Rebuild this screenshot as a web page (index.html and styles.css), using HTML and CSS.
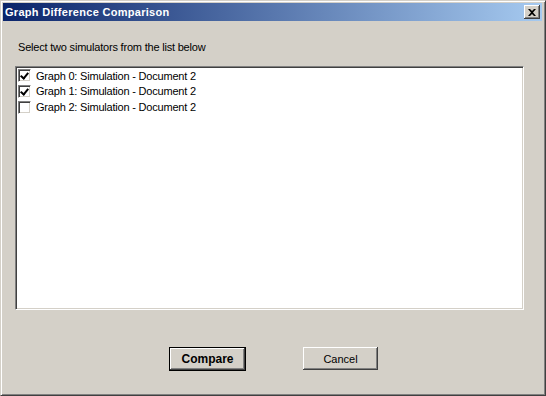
FILE: index.html
```html
<!DOCTYPE html>
<html lang="en">
<head>
  <meta charset="UTF-8" />
  <title>Graph Difference Comparison</title>
  <link rel="stylesheet" href="styles.css">
</head>
<body>
  <div class="window">
    <header class="titlebar">
      <span class="title">Graph Difference Comparison</span>
      <button class="close" aria-label="Close">
        <svg width="8" height="7" viewBox="0 0 8 7">
          <path d="M0 0h2l2 2 2-2h2L5 3.5 8 7H6L4 5 2 7H0l3-3.5z" fill="#000"/>
        </svg>
      </button>
    </header>

    <main class="content">
      <p class="prompt">Select two simulators from the list below</p>

      <div class="list">
        <label class="item">
          <span class="box checked"></span>
          Graph 0: Simulation - Document 2
        </label>
        <label class="item">
          <span class="box checked"></span>
          Graph 1: Simulation - Document 2
        </label>
        <label class="item">
          <span class="box"></span>
          Graph 2: Simulation - Document 2
        </label>
      </div>

      <div class="actions">
        <button class="btn default">Compare</button>
        <button class="btn">Cancel</button>
      </div>
    </main>
  </div>
</body>
</html>
```

FILE: styles.css
```css
:root {
  --face: #d4d0c8;
  --shadow: #808080;
  --dark: #404040;
  --light: #ffffff;
}

body {
  margin: 0;
  font-family: "Liberation Sans", Arial, sans-serif;
  font-size: 11px;
  color: #000;
}

.window {
  width: 546px;
  height: 396px;
  box-sizing: border-box;
  background: var(--face);
  border-top: 1px solid var(--face);
  border-left: 1px solid var(--face);
  border-right: 1px solid var(--dark);
  border-bottom: 1px solid var(--dark);
  box-shadow: inset 1px 1px 0 var(--light), inset -1px -1px 0 var(--shadow);
  padding: 2px 3px 3px 2px;
  display: flex;
  flex-direction: column;
}

.titlebar {
  height: 18px;
  display: flex;
  align-items: center;
  justify-content: space-between;
  padding: 0 2px 0 2px;
  background: linear-gradient(to right, #0a246a, #a6caf0);
}

.title {
  color: #fff;
  font-weight: bold;
  font-size: 11px;
  letter-spacing: 0.3px;
}

.close {
  width: 16px;
  height: 14px;
  padding: 0;
  margin: 0;
  display: flex;
  align-items: center;
  justify-content: center;
  background: var(--face);
  border: none;
  box-shadow: inset -1px -1px 0 var(--dark), inset 1px 1px 0 var(--light),
    inset -2px -2px 0 var(--shadow);
}

.content {
  flex: 1;
  display: flex;
  flex-direction: column;
  padding: 0 18px 0 12px;
}

.prompt {
  margin: 20px 0 0 3px;
  line-height: 13px;
  letter-spacing: -0.2px;
}

.list {
  margin-top: 12px;
  height: 244px;
  box-sizing: border-box;
  background: #fff;
  border-top: 1px solid var(--shadow);
  border-left: 1px solid var(--shadow);
  border-right: 1px solid var(--light);
  border-bottom: 1px solid var(--light);
  box-shadow: inset 1px 1px 0 var(--dark), inset -1px -1px 0 var(--face);
  padding: 0 2px 2px 1px;
  display: flex;
  flex-direction: column;
}

.item {
  height: 16px;
  flex: none;
  display: flex;
  align-items: center;
  gap: 5px;
  padding-left: 1px;
  letter-spacing: -0.2px;
}

.item:first-child {
  height: 15px;
  margin-top: 1px;
}

.box {
  width: 13px;
  height: 13px;
  box-sizing: border-box;
  background: #fff;
  border-top: 1px solid var(--shadow);
  border-left: 1px solid var(--shadow);
  border-right: 1px solid var(--light);
  border-bottom: 1px solid var(--light);
  box-shadow: inset 1px 1px 0 var(--dark), inset -1px -1px 0 var(--face);
  position: relative;
}

.box.checked::after {
  content: "";
  position: absolute;
  left: 3px;
  top: 1px;
  width: 3px;
  height: 6px;
  border-right: 2px solid #000;
  border-bottom: 2px solid #000;
  transform: rotate(40deg);
}

.actions {
  display: flex;
  justify-content: center;
  gap: 57px;
  margin-top: 37px;
  padding-left: 8px;
}

.btn {
  width: 75px;
  height: 23px;
  padding: 0;
  font-family: "Liberation Sans", Arial, sans-serif;
  font-size: 11px;
  color: #000;
  background: var(--face);
  border: none;
  box-shadow: inset -1px -1px 0 var(--dark), inset 1px 1px 0 var(--light),
    inset -2px -2px 0 var(--shadow);
}

.btn.default {
  font-weight: bold;
  font-size: 12px;
  width: 77px;
  height: 24px;
  border: 1px solid #000;
}
```
